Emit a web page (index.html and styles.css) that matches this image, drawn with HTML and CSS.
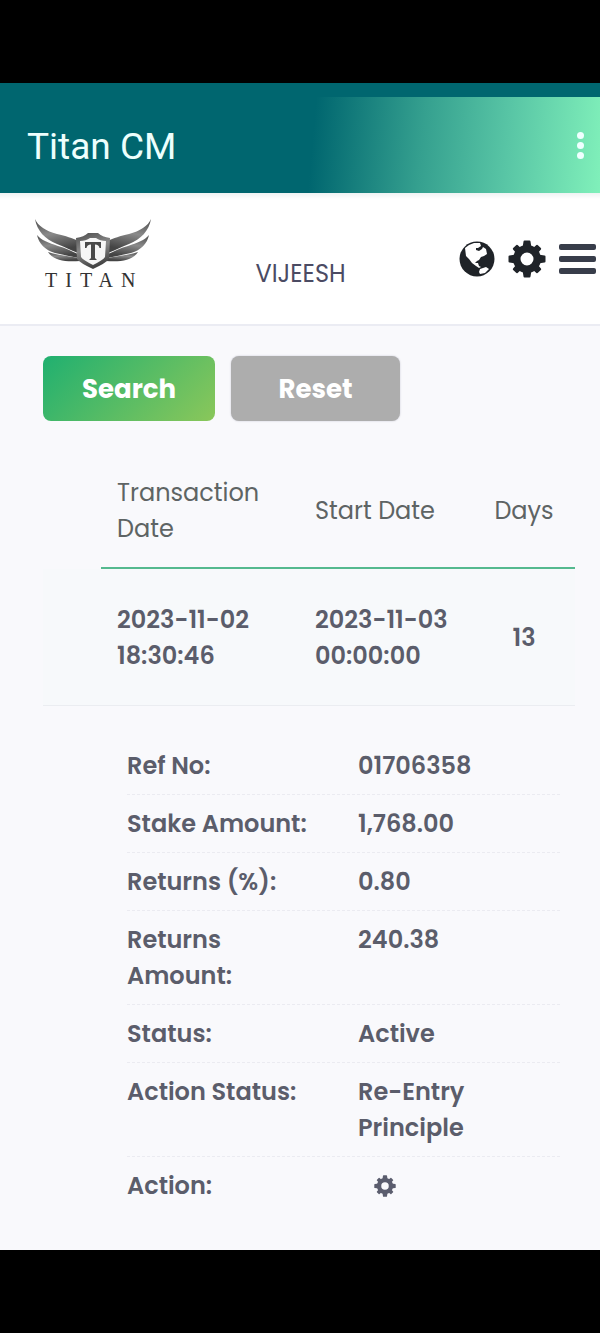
FILE: index.html
```html
<!DOCTYPE html>
<html lang="en">
<head>
    <meta charset="UTF-8">
    <meta name="viewport" content="width=device-width, initial-scale=1.0">
    <title>Titan CM</title>
    <link rel="stylesheet" href="styles.css">
</head>
<body>
    <svg class="sprite" aria-hidden="true">
        <symbol id="icon-gear" viewBox="0 0 38 38">
            <path fill-rule="evenodd" d="M19 5A14 14 0 1 0 19 33A14 14 0 1 0 19 5ZM19 12.500A6.500 6.500 0 1 1 19 25.500A6.500 6.500 0 1 1 19 12.500Z"/>
            <path id="tooth" d="M14.500 8L15.500 1.500Q15.600 0.500 16.500 0.500H21.500Q22.400 0.500 22.500 1.500L23.500 8Z"/>
            <use href="#tooth" transform="rotate(90 19 19)"/>
            <use href="#tooth" transform="rotate(180 19 19)"/>
            <use href="#tooth" transform="rotate(270 19 19)"/>
            <path id="corner" d="M15.500 8L15.800 2.500Q15.900 1.500 16.900 1.500H21.100Q22.100 1.500 22.200 2.500L22.500 8Z" transform="rotate(45 19 19)"/>
            <use href="#corner" transform="rotate(90 19 19)"/>
            <use href="#corner" transform="rotate(180 19 19)"/>
            <use href="#corner" transform="rotate(270 19 19)"/>
        </symbol>
    </svg>

    <header class="app-bar">
        <h1>Titan CM</h1>
        <button class="more" aria-label="More options">
            <span></span><span></span><span></span>
        </button>
    </header>

    <div class="topbar">
        <div class="logo">
            <svg viewBox="0 0 118 52" width="118" height="52" aria-hidden="true">
                <defs>
                    <linearGradient id="steel" x1="0" y1="0" x2="0.3" y2="1">
                        <stop offset="0" stop-color="#4c4c4c"/>
                        <stop offset="0.5" stop-color="#8a8a8a"/>
                        <stop offset="1" stop-color="#444"/>
                    </linearGradient>
                </defs>
                <g id="wing" fill="url(#steel)">
                    <path d="M1 0C4 7 12 12 23 15C32 17 38 19 45 22L44 34C36 31 31 28 23 25C11 20 3 12 1 0Z"/>
                    <path d="M3 16C7 21 15 24 24 27C32 29 39 33 44 35L45 39C36 37 29 36 21 34C11 31 5 25 3 16Z"/>
                    <path d="M14 33C22 36 34 37 45 39L46 42C32 43 20 42 14 33Z"/>
                </g>
                <use href="#wing" transform="translate(118 0) scale(-1 1)"/>
                <path fill="url(#steel)" d="M42 19Q50 18 54 14H64Q68 18 76 19L75 40Q72 44 59 50Q46 44 43 40Z"/>
                <path fill="#f6f6f6" d="M46 22Q52 22 56 19H62Q66 22 72 22L71 38Q69 41 59 46Q49 41 47 38Z"/>
                <path fill="#4a4a4a" d="M51 23H67V29H65.500Q65 25.500 61 25.500V39L63 41H55L57 39V25.500Q53 25.500 52.500 29H51Z"/>
            </svg>
            <span>TITAN</span>
        </div>
        <span class="user">VIJEESH</span>
        <nav class="tools">
            <button aria-label="Language">
                <svg viewBox="0 0 36 36" width="36" height="36">
                    <circle cx="18" cy="18" r="17.500" fill="#1f2328"/>
                    <path fill="#fff" d="M6 7L10 4L15 2L21 2L22 5L19 7L17 7L17 9L20 10L23 8L24 6L27 8L28 13L25 15L22 16L20 19L18 20L16 22L19 22L20 25L22 26L20 27L17 25L13 22L10 18L7 15Z"/>
                    <path fill="#fff" d="M21 28L27 26L30 28L26 32L21 33L20 31Z"/>
                </svg>
            </button>
            <button aria-label="Settings">
                <svg width="38" height="38" fill="#1f2328"><use href="#icon-gear"/></svg>
            </button>
            <button class="menu" aria-label="Menu">
                <span></span><span></span><span></span>
            </button>
        </nav>
    </div>

    <main class="content">
        <div class="actions">
            <button class="btn btn-search">Search</button>
            <button class="btn btn-reset">Reset</button>
        </div>

        <table class="stakes">
            <thead>
                <tr>
                    <td class="toggle"></td>
                    <th class="date">Transaction Date</th>
                    <th>Start Date</th>
                    <th class="days">Days</th>
                </tr>
            </thead>
            <tbody>
                <tr>
                    <td></td>
                    <td>2023-11-02 18:30:46</td>
                    <td>2023-11-03 00:00:00</td>
                    <td class="days">13</td>
                </tr>
            </tbody>
        </table>

        <dl class="details">
            <div><dt>Ref No:</dt><dd>01706358</dd></div>
            <div><dt>Stake Amount:</dt><dd>1,768.00</dd></div>
            <div><dt>Returns (%):</dt><dd>0.80</dd></div>
            <div><dt>Returns Amount:</dt><dd>240.38</dd></div>
            <div><dt>Status:</dt><dd>Active</dd></div>
            <div><dt>Action Status:</dt><dd>Re-Entry Principle</dd></div>
            <div>
                <dt>Action:</dt>
                <dd>
                    <button class="row-action" aria-label="Action">
                        <svg width="22" height="22" fill="#5b5d6e"><use href="#icon-gear"/></svg>
                    </button>
                </dd>
            </div>
        </dl>
    </main>
</body>
</html>
```
FILE: styles.css
```css
* {
    box-sizing: border-box;
}
body {
    margin: 0;
    min-height: 100vh;
    padding: 83px 0;
    display: flex;
    flex-direction: column;
    background: #000;
    color: #5b5d6b;
    font-family: Poppins, Inter, sans-serif;
    font-size: 24px;
    line-height: 36px;
}
button {
    padding: 0;
    border: none;
    background: none;
    font-family: inherit;
    cursor: pointer;
}
svg {
    display: block;
}
.sprite {
    position: absolute;
    width: 0;
    height: 0;
}

/* App bar */
.app-bar {
    display: flex;
    align-items: center;
    justify-content: space-between;
    height: 110px;
    padding: 0 12px 0 27px;
    border-top: 14px solid #00666f;
    background: linear-gradient(95deg, #00666f 52%, #35a08f 70%, #58c5a5 84%, #80f0ba 100%);
}
.app-bar h1 {
    margin: 0;
    padding-top: 4px;
    color: #edfffd;
    font-family: Roboto, sans-serif;
    font-size: 37px;
    font-weight: 400;
}
.more {
    display: flex;
    flex-direction: column;
    gap: 3px;
    padding: 4px;
}
.more span {
    width: 7px;
    height: 7px;
    border-radius: 50%;
    background: #efffff;
}

/* Logo row */
.topbar {
    display: flex;
    justify-content: space-between;
    height: 133px;
    padding: 26px 4px 0 34px;
    border-bottom: 2px solid #ebecf3;
    background: linear-gradient(#eef3f3, #fff 6px);
}
.logo span {
    display: block;
    padding-left: 11px;
    color: #333;
    font-family: "Liberation Serif", serif;
    font-size: 20px;
    font-weight: 400;
    line-height: 18px;
    letter-spacing: 8px;
}
.user {
    padding: 37px 10px 0 0;
    color: #4b4b63;
}
.tools {
    display: flex;
    gap: 13px;
    height: 80px;
    align-items: center;
}
.menu {
    display: flex;
    flex-direction: column;
    gap: 6px;
}
.menu span {
    width: 37px;
    height: 6px;
    border-radius: 2px;
    background: #383d4a;
}

/* Page content */
.content {
    flex: 1;
    padding: 30px 25px 32px 43px;
    background: #f9f9fc;
}
.actions {
    display: flex;
    gap: 16px;
    margin-bottom: 32px;
}
.btn {
    height: 65px;
    padding-top: 2px;
    border-radius: 8px;
    color: #fff;
    font-size: 26px;
    font-weight: 700;
}
.btn-search {
    width: 172px;
    background: linear-gradient(135deg, #20b070, #8ac75a);
}
.btn-reset {
    width: 169px;
    background: #adadad;
    box-shadow: 0 0 2px #c4c4d0;
}

.stakes {
    width: 100%;
    table-layout: fixed;
    border-collapse: separate;
    border-spacing: 0;
}
.toggle {
    width: 58px;
}
.date {
    width: 198px;
}
.stakes th {
    padding: 22px 16px 20px;
    border-bottom: 2px solid #55b98f;
    color: #5e6464;
    font-weight: 400;
    text-align: left;
}
.stakes tbody td {
    padding: 33px 16px 31px;
    border-bottom: 1px solid #ebedf1;
    background: #f7f9fb;
    font-weight: 600;
}
.stakes .days {
    width: 96px;
    padding-right: 6px;
    padding-left: 0;
    text-align: center;
}

.details {
    margin: 31px 15px 0 84px;
    font-weight: 600;
}
.details div {
    display: grid;
    grid-template-columns: 231px 1fr;
    padding: 11px 0 10px;
    border-bottom: 1px dashed #ebebf1;
}
.details div:last-child {
    border-bottom: none;
}
.details dt {
    padding-right: 40px;
}
.details dd {
    margin: 0;
    padding-right: 40px;
}
.row-action {
    display: flex;
    align-items: center;
    height: 36px;
    padding-left: 16px;
}
```
